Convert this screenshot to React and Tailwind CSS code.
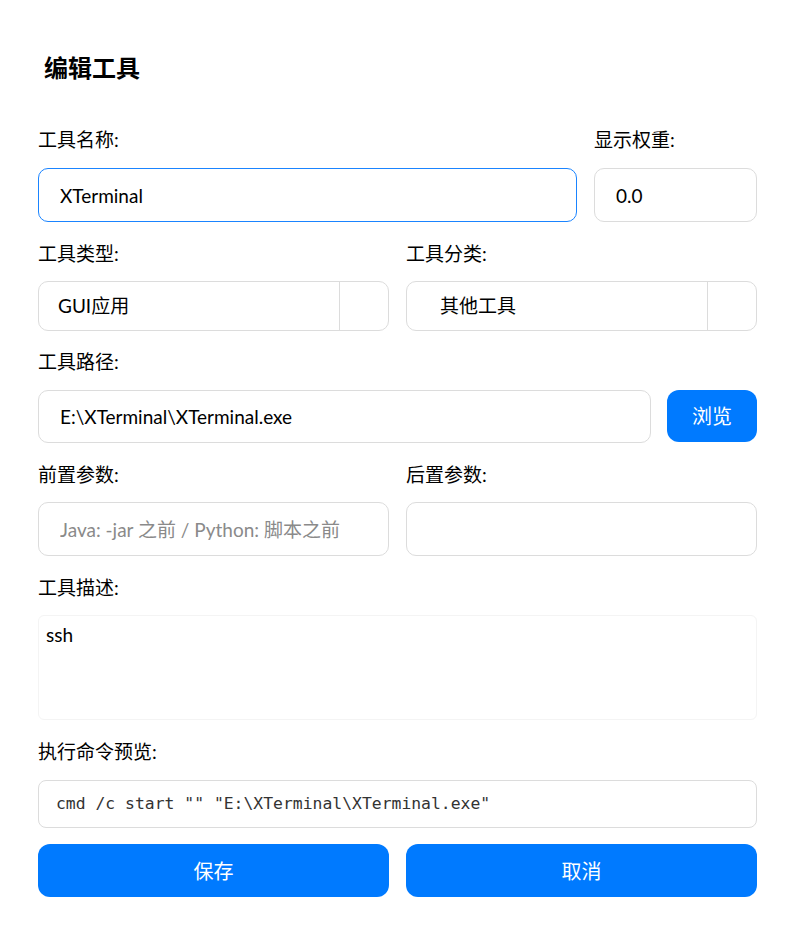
import { useState } from 'react';

const font = { fontFamily: 'Lato, "Noto Sans CJK SC", sans-serif' };

const Label = ({ children }) => (
  <div className="h-[24px] text-[19px] leading-[24px] text-black">{children}</div>
);

const SelectBox = ({ value, padLeft }) => (
  <div className="flex h-[50px] rounded-[10px] border border-[#dcdcdc] bg-white">
    <div className={`flex-1 flex items-center text-[19px] text-black ${padLeft}`}>{value}</div>
    <div className="w-[49px] border-l border-[#dcdcdc]" />
  </div>
);

export default function App() {
  const [name, setName] = useState('XTerminal');
  const [weight, setWeight] = useState('0.0');
  const [path, setPath] = useState('E:\\XTerminal\\XTerminal.exe');

  return (
    <div className="min-h-screen bg-white px-[38px] pt-[52px]" style={font}>
      <h1 className="ml-[6px] text-[24px] font-bold leading-[32px] text-black">编辑工具</h1>

      <div className="mt-[44px] flex gap-[17px]">
        <div className="flex-1">
          <Label>工具名称:</Label>
          <input
            value={name}
            onChange={(e) => setName(e.target.value)}
            className="mt-[16px] h-[54px] w-full rounded-[10px] border-[1.5px] border-[#1a84ff] px-[21px] text-[19px] text-black outline-none"
          />
        </div>
        <div className="w-[163px]">
          <Label>显示权重:</Label>
          <input
            value={weight}
            onChange={(e) => setWeight(e.target.value)}
            className="mt-[16px] h-[54px] w-full rounded-[10px] border border-[#dcdcdc] px-[21px] text-[19px] text-black outline-none"
          />
        </div>
      </div>

      <div className="mt-[20px] grid grid-cols-2 gap-x-[17px]">
        <div>
          <Label>工具类型:</Label>
          <div className="mt-[15px]">
            <SelectBox value="GUI应用" padLeft="pl-[19px]" />
          </div>
        </div>
        <div>
          <Label>工具分类:</Label>
          <div className="mt-[15px]">
            <SelectBox value="其他工具" padLeft="pl-[33px]" />
          </div>
        </div>
      </div>

      <div className="mt-[19px]">
        <Label>工具路径:</Label>
        <div className="mt-[16px] flex gap-[16px]">
          <input
            value={path}
            onChange={(e) => setPath(e.target.value)}
            className="h-[53px] flex-1 rounded-[10px] border border-[#dcdcdc] px-[21px] text-[19px] text-black outline-none"
          />
          <button className="h-[52px] w-[90px] rounded-[12px] bg-[#007aff] text-[20px] text-white">浏览</button>
        </div>
      </div>

      <div className="mt-[20px] grid grid-cols-2 gap-x-[17px]">
        <div>
          <Label>前置参数:</Label>
          <input
            placeholder="Java: -jar 之前 / Python: 脚本之前"
            className="mt-[15px] h-[54px] w-full rounded-[10px] border border-[#dcdcdc] px-[21px] text-[19px] text-black outline-none placeholder:text-[#8a8a8a]"
          />
        </div>
        <div>
          <Label>后置参数:</Label>
          <input className="mt-[15px] h-[54px] w-full rounded-[10px] border border-[#dcdcdc] px-[21px] text-[19px] text-black outline-none" />
        </div>
      </div>

      <div className="mt-[20px]">
        <Label>工具描述:</Label>
        <textarea
          defaultValue="ssh"
          className="mt-[15px] block h-[105px] w-full resize-none rounded-[6px] border border-[#f4f4f4] px-[7px] py-[6px] text-[19px] leading-[26px] text-black outline-none"
        />
      </div>

      <div className="mt-[20px]">
        <Label>执行命令预览:</Label>
        <div className="mt-[16px] flex h-[48px] items-center rounded-[8px] border border-[#dcdcdc] px-[17px]">
          <span className="text-[16.4px] text-[#333]" style={{ fontFamily: '"DejaVu Sans Mono", monospace' }}>
            cmd /c start "" "E:\XTerminal\XTerminal.exe"
          </span>
        </div>
      </div>

      <div className="mt-[16px] grid grid-cols-2 gap-x-[17px]">
        <button className="h-[53px] rounded-[12px] bg-[#007aff] text-[20px] text-white">保存</button>
        <button className="h-[53px] rounded-[12px] bg-[#007aff] text-[20px] text-white">取消</button>
      </div>
    </div>
  );
}
